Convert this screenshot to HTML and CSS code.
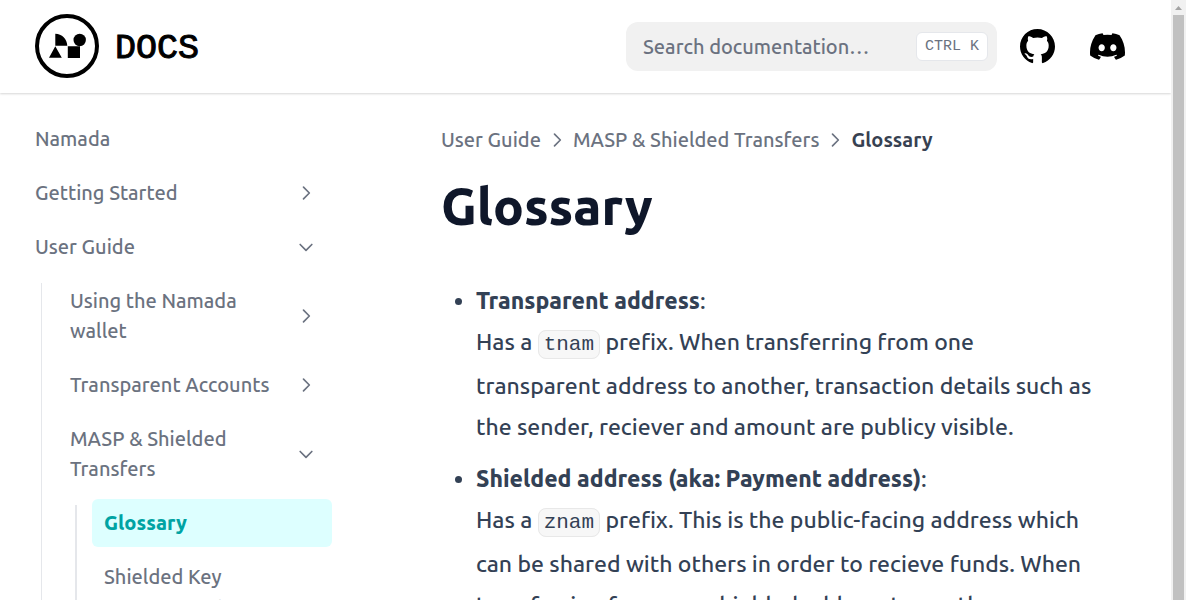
FILE: index.html
```html
<!DOCTYPE html>
<html lang="en">
<head>
<meta charset="utf-8">
<meta name="viewport" content="width=device-width, initial-scale=1">
<title>Glossary</title>
<link rel="stylesheet" href="styles.css">
</head>
<body>
<div class="page">
  <header class="navbar">
    <a class="brand" href="#">
      <svg class="brand-mark" viewBox="0 0 64 64" aria-hidden="true">
        <circle cx="32" cy="32" r="30" fill="none" stroke="#000" stroke-width="4"/>
        <path d="M20.300 19.800C27 20 32 25 32.300 31.700H20.300ZM20.300 32.300L26.800 43.800H14ZM32.800 32.300H45V44H32.800Z"/>
        <circle cx="44.700" cy="26" r="6.200"/>
      </svg>
      <span class="brand-name">DOCS</span>
    </a>
    <form class="search">
      <input class="search-input" type="search" placeholder="Search documentation…" aria-label="Search documentation">
      <kbd class="search-key">CTRL K</kbd>
    </form>
    <a class="social" href="#" aria-label="GitHub">
      <svg viewBox="3 3 18 18"><path d="M12 3C7.030 3 3 7.030 3 12C3 15.980 5.580 19.350 9.150 20.540C9.600 20.620 9.770 20.340 9.770 20.110C9.770 19.900 9.760 19.190 9.760 18.430C7.500 18.850 6.910 17.880 6.730 17.380C6.630 17.120 6.190 16.320 5.810 16.110C5.500 15.940 5.050 15.520 5.800 15.510C6.500 15.500 7.010 16.160 7.180 16.430C7.990 17.790 9.280 17.410 9.800 17.170C9.880 16.580 10.110 16.190 10.370 15.960C8.370 15.730 6.280 14.960 6.280 11.520C6.280 10.540 6.630 9.730 7.200 9.100C7.110 8.870 6.790 7.940 7.290 6.700C7.290 6.700 8.050 6.460 9.770 7.620C10.490 7.420 11.250 7.320 12.020 7.320C12.780 7.320 13.550 7.420 14.270 7.620C15.990 6.450 16.740 6.700 16.740 6.700C17.240 7.940 16.920 8.870 16.830 9.100C17.410 9.730 17.760 10.530 17.760 11.520C17.760 14.970 15.660 15.730 13.650 15.960C13.980 16.240 14.260 16.770 14.260 17.620C14.260 18.820 14.250 19.790 14.250 20.110C14.250 20.340 14.420 20.630 14.870 20.540C18.420 19.350 21 15.970 21 12C21 7.030 16.970 3 12 3Z"/></svg>
    </a>
    <a class="social" href="#" aria-label="Discord">
      <svg viewBox="0 0 24 24"><path d="M20.317 4.370A19.791 19.791 0 0 0 15.432 2.855A.074.074 0 0 0 15.353 2.892C15.142 3.267 14.909 3.757 14.745 4.141A18.270 18.270 0 0 0 9.258 4.141A12.640 12.640 0 0 0 8.641 2.892A.077.077 0 0 0 8.562 2.855A19.736 19.736 0 0 0 3.677 4.370A.070.070 0 0 0 3.645 4.398C.533 9.046-.320 13.580.099 18.058A.082.082 0 0 0 .130 18.115A19.900 19.900 0 0 0 6.123 21.144A.078.078 0 0 0 6.207 21.116A14.090 14.090 0 0 0 7.433 19.122A.076.076 0 0 0 7.391 19.016A13.107 13.107 0 0 1 5.519 18.124A.077.077 0 0 1 5.511 17.996L5.883 17.704A.074.074 0 0 1 5.960 17.694C9.888 19.487 14.140 19.487 18.021 17.694A.074.074 0 0 1 18.099 17.703L18.472 17.996A.077.077 0 0 1 18.466 18.123A12.299 12.299 0 0 1 16.593 19.014A.077.077 0 0 0 16.552 19.121C16.912 19.819 17.324 20.483 17.776 21.114A.076.076 0 0 0 17.860 21.142A19.839 19.839 0 0 0 23.862 18.113A.077.077 0 0 0 23.894 18.059C24.394 12.882 23.056 8.385 20.348 4.397A.061.061 0 0 0 20.317 4.370ZM8.020 15.330C6.837 15.330 5.863 14.245 5.863 12.911S6.819 10.492 8.020 10.492C9.230 10.492 10.196 11.587 10.177 12.911C10.177 14.245 9.221 15.330 8.020 15.330ZM15.995 15.330C14.812 15.330 13.838 14.245 13.838 12.911S14.793 10.492 15.995 10.492C17.205 10.492 18.171 11.587 18.152 12.911C18.152 14.245 17.205 15.330 15.995 15.330Z"/></svg>
    </a>
  </header>
  <div class="columns">
    <nav class="sidebar" aria-label="Pages">
      <ul class="menu">
        <li><a class="entry" href="#">Namada</a></li>
        <li><a class="entry" href="#">Getting Started <svg class="chevron" viewBox="0 0 24 24"><path d="M9 5l7 7-7 7"/></svg></a></li>
        <li>
          <a class="entry" href="#">User Guide <svg class="chevron open" viewBox="0 0 24 24"><path d="M9 5l7 7-7 7"/></svg></a>
          <ul class="menu submenu">
            <li><a class="entry" href="#">Using the Namada wallet <svg class="chevron" viewBox="0 0 24 24"><path d="M9 5l7 7-7 7"/></svg></a></li>
            <li><a class="entry" href="#">Transparent Accounts <svg class="chevron" viewBox="0 0 24 24"><path d="M9 5l7 7-7 7"/></svg></a></li>
            <li>
              <a class="entry" href="#">MASP &amp; Shielded Transfers <svg class="chevron open" viewBox="0 0 24 24"><path d="M9 5l7 7-7 7"/></svg></a>
              <ul class="menu submenu inner">
                <li><a class="entry active" href="#" aria-current="page">Glossary</a></li>
                <li><a class="entry" href="#">Shielded Key<br>Management</a></li>
              </ul>
            </li>
          </ul>
        </li>
      </ul>
    </nav>
    <main class="content">
      <nav class="crumbs" aria-label="Breadcrumb">
        <a href="#">User Guide</a>
        <svg class="crumb-arrow" viewBox="0 0 24 24"><path d="M9 5l7 7-7 7"/></svg>
        <a href="#">MASP &amp; Shielded Transfers</a>
        <svg class="crumb-arrow" viewBox="0 0 24 24"><path d="M9 5l7 7-7 7"/></svg>
        <span class="current">Glossary</span>
      </nav>
      <h1 class="title">Glossary</h1>
      <ul class="terms">
        <li><strong>Transparent address</strong>:<br>Has a <code>tnam</code> prefix. When transferring from one transparent address to another, transaction details such as the sender, reciever and amount are publicy visible.</li>
        <li><strong>Shielded address (aka: Payment address)</strong>:<br>Has a <code>znam</code> prefix. This is the public-facing address which can be shared with others in order to recieve funds. When transferring from a unshielded address to another</li>
      </ul>
    </main>
  </div>
</div>
<div class="scrollbar" aria-hidden="true">
  <svg class="scroll-arrow" viewBox="0 0 15 15"><path d="M4 10l3.500-4 3.500 4z"/></svg>
  <div class="scroll-thumb"></div>
</div>
</body>
</html>
```
FILE: styles.css
```css
* { box-sizing: border-box; }

body {
  margin: 0;
  height: 100vh;
  display: flex;
  overflow: hidden;
  background: #fff;
  color: #334155;
  font-family: Ubuntu, "Noto Sans", sans-serif;
  font-size: 20px;
  font-weight: 500;
  line-height: 30px;
}

a { color: inherit; text-decoration: none; }
ul { margin: 0; padding: 0; }

.page {
  flex: 1;
  min-width: 0;
  display: flex;
  flex-direction: column;
  overflow: hidden;
}

.navbar {
  flex: none;
  display: flex;
  align-items: center;
  padding: 14px 46px 15px 35px;
  box-shadow: 0 1px 2px rgba(0, 0, 0, 0.16);
}

.brand {
  display: flex;
  align-items: center;
  gap: 16px;
  margin-right: auto;
  color: #000;
}
.brand-mark { width: 64px; height: 64px; }
.brand-name {
  padding-top: 5px;
  font: 35px/40px "Liberation Mono", monospace;
  -webkit-text-stroke: 1px #000;
}

.search {
  display: flex;
  align-items: center;
  width: 371px;
  height: 49px;
  padding: 0 9px 0 17px;
  border-radius: 12px;
  background: #f1f1f1;
}
.search-input {
  flex: 1;
  min-width: 0;
  padding: 2px 0 0;
  border: 0;
  outline: 0;
  background: none;
  font: inherit;
}
.search-input::placeholder { color: #6b7280; opacity: 1; }
.search-key {
  padding: 0 8px;
  border: 1px solid #e5e7eb;
  border-radius: 6px;
  background: #fff;
  color: #6b7280;
  font: 15px/27px "Liberation Mono", monospace;
}

.social { margin-left: 23px; }
.social + .social { margin-left: 35px; }
.social svg { display: block; width: 35px; height: 35px; }

.columns { display: flex; }

.sidebar {
  flex: none;
  width: 355px;
  padding: 22px 23px 0;
  color: #6b7280;
}
.menu {
  display: flex;
  flex-direction: column;
  gap: 6px;
  list-style: none;
}
.entry {
  display: flex;
  align-items: center;
  justify-content: space-between;
  gap: 12px;
  padding: 9px 12px;
  border-radius: 6px;
}
.entry.active {
  background: #dff;
  color: #00a3a3;
  font-weight: 800;
}
.chevron, .crumb-arrow {
  flex: none;
  fill: none;
  stroke: currentColor;
  stroke-width: 2;
  stroke-linecap: round;
  stroke-linejoin: round;
}
.chevron { width: 20px; height: 20px; margin-right: 4px; }
.chevron.open { transform: rotate(90deg); }
.submenu {
  position: relative;
  margin-left: 18px;
  padding: 6px 0 0 17px;
}
.submenu::before {
  content: "";
  position: absolute;
  top: 12px;
  bottom: 0;
  left: 0;
  width: 1px;
  background: #e5e7eb;
}
.submenu.inner { margin-left: 17px; }
.submenu.inner::before { width: 2px; }

.content {
  flex: 1;
  min-width: 0;
  padding: 32px 70px 0 86px;
}
.crumbs {
  display: flex;
  align-items: center;
  gap: 6px;
  color: #6b7280;
  white-space: nowrap;
}
.crumb-arrow { width: 20px; height: 20px; }
.current { color: #374151; font-weight: 600; }
.title {
  margin: 23px 0 0;
  color: #0f172a;
  font-size: 51px;
  line-height: 56px;
  font-weight: 800;
}
.terms {
  margin-top: 46px;
  padding-left: 35px;
  font-size: 23px;
  line-height: 41px;
}
.terms li + li { margin-top: 11px; }
.terms strong { font-weight: 800; }
.terms code {
  padding: 2px 5px;
  border: 1px solid #e8e8e8;
  border-radius: 8px;
  background: #f7f7f7;
  font-family: "Liberation Mono", monospace;
  font-size: 21px;
  font-weight: 400;
}

.scrollbar {
  flex: none;
  width: 15px;
  display: flex;
  flex-direction: column;
  background: #f1f1f1;
}
.scroll-arrow { width: 15px; height: 15px; fill: #a3a3a3; }
.scroll-thumb { flex: 1; margin: 0 2px; background: #c1c1c1; }
```
